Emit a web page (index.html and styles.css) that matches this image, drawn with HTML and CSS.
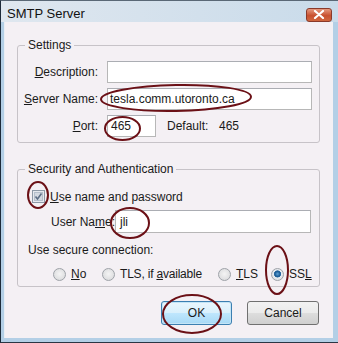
FILE: index.html
```html
<!DOCTYPE html>
<html>
<head>
<meta charset="utf-8">
<link rel="stylesheet" href="styles.css">
</head>
<body>
<div class="window">
  <div class="titlebar">
    <span class="title">SMTP Server</span>
    <span class="close"><svg width="14" height="9" viewBox="0 0 14 9"><path d="M3 1 L11 8 M11 1 L3 8" stroke="#fff" stroke-width="2.2" stroke-linecap="round"/></svg></span>
  </div>
  <div class="content">
    <fieldset class="group settings">
      <legend>Settings</legend>
      <div class="form">
        <span class="lbl"><u>D</u>escription:</span>
        <span class="field"></span>
        <span class="lbl"><u>S</u>erver Name:</span>
        <span class="field">tesla.comm.utoronto.ca</span>
        <span class="lbl"><u>P</u>ort:</span>
        <span class="portrow">
          <span class="field port">465</span>
          <span class="deflbl">Default:</span>
          <span class="defval">465</span>
        </span>
      </div>
    </fieldset>
    <fieldset class="group security">
      <legend>Security and Authentication</legend>
      <div class="checkrow">
        <span class="checkbox"><svg width="13" height="13" viewBox="0 0 13 13"><rect x="0.5" y="0.5" width="12" height="12" fill="#e6e9ef" stroke="#8d99a7"/><rect x="2.5" y="2.5" width="8" height="8" fill="#d3d9e2" stroke="#b5bfcc"/><path d="M3.5 6.5 L5.5 9 L9.5 3.5" fill="none" stroke="#5d6e86" stroke-width="1.6"/></svg></span>
        <span><u>U</u>se name and password</span>
      </div>
      <div class="userrow">
        <span class="lbl2">User Na<u>m</u>e:</span>
        <span class="field user">jli</span>
      </div>
      <div class="secure">Use secure connection:</div>
      <div class="radios">
        <span class="radio r-no"><span class="dot"></span><span><u>N</u>o</span></span>
        <span class="radio r-tlsif"><span class="dot"></span><span>TLS, if <u>a</u>vailable</span></span>
        <span class="radio r-tls"><span class="dot"></span><span><u>T</u>LS</span></span>
        <span class="radio r-ssl"><span class="dot on"></span><span>SS<u>L</u></span></span>
      </div>
    </fieldset>
    <div class="buttons">
      <span class="btn default">OK</span>
      <span class="btn">Cancel</span>
    </div>
  </div>
  <svg class="marks" width="338" height="343" viewBox="0 0 338 343">
    <g fill="none" stroke="#6b1016" stroke-width="2">
      <ellipse cx="176" cy="98" rx="75" ry="13" transform="rotate(-1 176 98)"/>
      <ellipse cx="122.5" cy="128.5" rx="17.5" ry="11.5"/>
      <ellipse cx="38" cy="195" rx="10" ry="13"/>
      <ellipse cx="130" cy="223" rx="19" ry="15"/>
      <ellipse cx="277" cy="270" rx="11" ry="24"/>
      <ellipse cx="192" cy="314" rx="29" ry="19"/>
    </g>
  </svg>
</div>
</body>
</html>
```
FILE: styles.css
```css
html, body {
  margin: 0;
  padding: 0;
  background: #b6d0e6;
}
body {
  width: 338px;
  height: 343px;
  overflow: hidden;
  font-family: "Liberation Sans", Arial, sans-serif;
  font-size: 12px;
  color: #1a1a1a;
  white-space: nowrap;
}
.window {
  position: relative;
  width: 338px;
  height: 343px;
  box-sizing: border-box;
  border-left: 1px solid #1d2b3a;
  border-top: 1px solid #5a6876;
  border-bottom: 1px solid #2a3644;
  background: #b3cfe6;
  display: flex;
  flex-direction: column;
}
.titlebar {
  height: 21px;
  flex: none;
  display: flex;
  align-items: center;
  justify-content: space-between;
  padding: 0 6px 0 6px;
  background: linear-gradient(to right, #dfe7ef, #c9dbea);
}
.title {
  font-family: "Liberation Sans", Arial, sans-serif;
  font-size: 13px;
  color: #111;
  padding-top: 3px;
}
.close {
  width: 26px;
  height: 14px;
  margin-top: 6px;
  box-sizing: border-box;
  border: 1px solid #8a3a2a;
  border-radius: 3px;
  background: linear-gradient(#e59a80, #c8502f 55%, #d0673f);
  display: flex;
  align-items: center;
  justify-content: center;
}
.content {
  flex: 1;
  margin: 0 5px 4px 3px;
  background: #f4f0f4;
  border-left: 1px solid #e8eef4;
  padding-top: 15px;
}
.group {
  margin: 0 13px 0 12px;
  padding: 0;
  border: 1px solid #c7c3c8;
  border-radius: 3px;
  min-width: 0;
}
.group legend {
  margin-left: 7px;
  padding: 0 3px;
  line-height: 16px;
}
.settings {
  padding: 8px 7px 5px 0;
}
.form {
  display: grid;
  grid-template-columns: 80px 205px;
  column-gap: 9px;
  row-gap: 5px;
  align-items: center;
}
.lbl {
  text-align: right;
}
.field {
  height: 22px;
  box-sizing: border-box;
  border: 1px solid #b7b7b7;
  border-top-color: #abadb3;
  background: #fff;
  display: flex;
  align-items: center;
  padding-left: 2px;
}
.portrow {
  display: flex;
  align-items: center;
}
.field.port {
  width: 49px;
  padding-left: 3px;
}
.deflbl {
  margin-left: 11px;
  width: 52px;
}
.security {
  margin-top: 18px;
  padding: 0 7px 5px 0;
}
.checkrow {
  display: flex;
  align-items: center;
  margin: 12px 0 0 14px;
  height: 15px;
}
.checkbox {
  display: flex;
  margin-right: 5px;
}
.userrow {
  display: grid;
  grid-template-columns: 64px 196px;
  align-items: center;
  margin: 6px 0 0 33px;
}
.field.user {
  height: 23px;
  padding-left: 4px;
}
.secure {
  margin: 10px 0 0 10px;
}
.radios {
  display: flex;
  align-items: center;
  margin: 10px 0 0 35px;
}
.radio {
  display: flex;
  align-items: center;
  gap: 5px;
  flex: none;
}
.r-no { width: 49px; }
.r-tlsif { width: 116px; letter-spacing: -0.2px; }
.r-tls { width: 53px; }
.dot {
  width: 11px;
  height: 11px;
  border-radius: 50%;
  border: 1px solid #9ea2a8;
  background: radial-gradient(circle at 50% 45%, #f4f4f4, #d5d6d8);
  display: block;
  flex: none;
}
.dot.on {
  background: radial-gradient(circle at 50% 45%, #5fa3d8 0, #1d5d96 2.5px, #2d6ba3 3.3px, #e8ecf0 3.8px, #d2d5d9);
}
.buttons {
  display: flex;
  justify-content: flex-end;
  gap: 15px;
  margin: 14px 14px 0 0;
}
.btn {
  width: 72px;
  height: 24px;
  box-sizing: border-box;
  border: 1px solid #707070;
  border-radius: 3px;
  background: linear-gradient(#f2f2f2 0, #ebebeb 48%, #dddddd 52%, #cfcfcf);
  display: flex;
  align-items: center;
  justify-content: center;
}
.btn.default {
  width: 71px;
  border-color: #3c7fb1;
  background: linear-gradient(#eaf6fd 0, #d9f0fc 48%, #bee6fd 52%, #a7d9f5);
  box-shadow: inset 0 0 0 1px #c4e5f6;
}
.marks {
  position: absolute;
  left: -1px;
  top: -1px;
  pointer-events: none;
}
```
